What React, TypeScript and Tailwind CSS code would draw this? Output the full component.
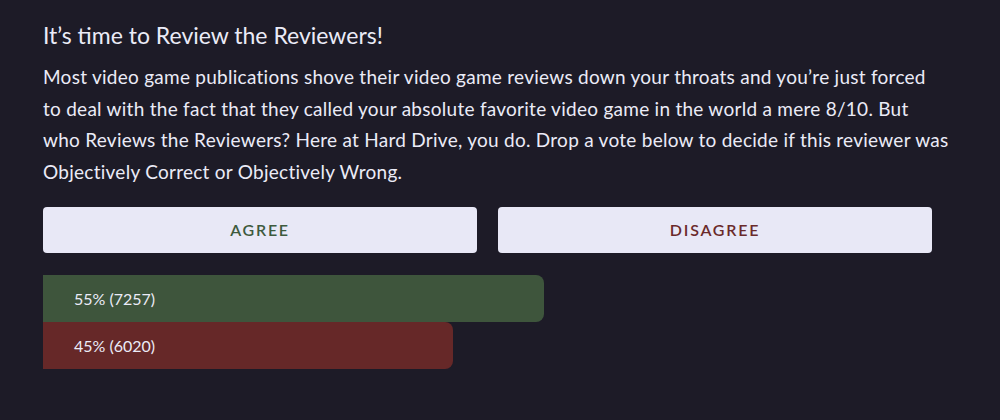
const votes = [
  { label: "55% (7257)", pct: 55, color: "bg-[#3e553c]" },
  { label: "45% (6020)", pct: 45, color: "bg-[#662828]" },
];

export default function App() {
  return (
    <div
      className="min-h-[420px] w-full bg-[#1d1b27] text-[#ebebf7]"
      style={{ fontFamily: "Lato, 'Noto Sans', sans-serif" }}
    >
      <div className="pl-[43px] pt-[21px]">
        <h2 className="text-[23px] leading-[28px]">
          It’s time to Review the Reviewers!
        </h2>
        <p className="mt-[12px] w-[915px] text-[19px] leading-[31.5px] tracking-[0.014em]">
          Most video game publications shove their video game reviews down your
          throats and you’re just forced
          <br />
          to deal with the fact that they called your absolute favorite video
          game in the world a mere 8/10. But
          <br />
          who Reviews the Reviewers? Here at Hard Drive, you do. Drop a vote
          below to decide if this reviewer was
          <br />
          Objectively Correct or Objectively Wrong.
        </p>
        <div className="mt-[20px] flex w-[889px] gap-[21px]">
          <button className="h-[46px] flex-1 rounded-[4px] bg-[#e8e8f6] text-[16px] font-semibold tracking-[0.11em] text-[#3d5a3d]">
            AGREE
          </button>
          <button className="h-[46px] flex-1 rounded-[4px] bg-[#e8e8f6] text-[16px] font-semibold tracking-[0.11em] text-[#6a2a2a]">
            DISAGREE
          </button>
        </div>
        <div className="mt-[22px] flex flex-col">
          {votes.map((v) => (
            <div
              key={v.label}
              className={`flex h-[47px] items-center rounded-r-[8px] pl-[31px] text-[16px] ${v.color}`}
              style={{ width: `${v.pct * 9.1}px` }}
            >
              {v.label}
            </div>
          ))}
        </div>
      </div>
    </div>
  );
}
